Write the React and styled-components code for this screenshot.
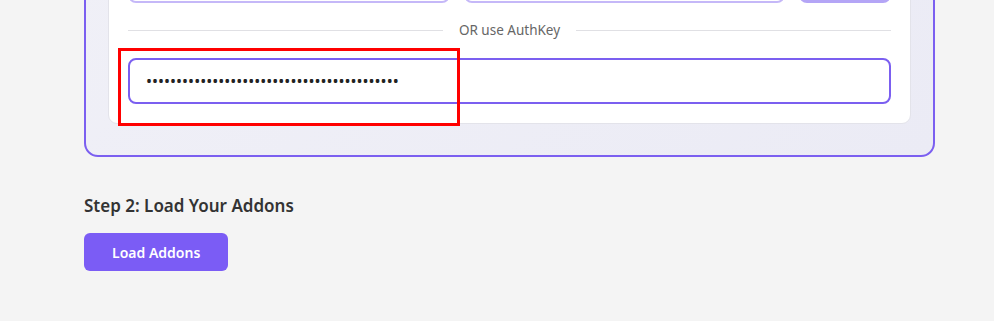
import styled, { createGlobalStyle } from "styled-components";

const GlobalStyle = createGlobalStyle`
  html, body {
    margin: 0;
    padding: 0;
    background: #f4f4f4;
    font-family: "Noto Sans", "Open Sans", sans-serif;
    color: #333;
  }
`;

const Page = styled.div`
  position: relative;
  width: 994px;
  height: 321px;
  overflow: hidden;
`;

const Scroller = styled.div`
  margin-top: -83px;
  padding: 0 59px 0 84px;
`;

const StepBox = styled.section`
  border: 2px solid #7b5ff0;
  border-radius: 14px;
  background: linear-gradient(135deg, #f0f0f7 0%, #ebebf5 100%);
  padding: 22px 22px 31px;
`;

const Card = styled.div`
  background: #fff;
  border: 1px solid #e3e3ea;
  border-radius: 9px;
  padding: 19px 19px 19px;
`;

const Row = styled.div`
  display: flex;
  gap: 14px;
`;

const TextInput = styled.input`
  flex: 1;
  height: 42px;
  box-sizing: border-box;
  border: 2px solid #c5b8f8;
  border-radius: 8px;
  padding: 0 16px;
  font: inherit;
  font-size: 14px;
`;

const LoginButton = styled.button`
  width: 92px;
  height: 42px;
  border: none;
  border-radius: 8px;
  background: #b4a5f6;
  color: #fff;
  font: inherit;
  font-weight: 600;
`;

const Divider = styled.div`
  display: flex;
  align-items: center;
  gap: 16px;
  margin: 18px 0 19px;
  font-size: 13.5px;
  color: #666;

  &::before,
  &::after {
    content: "";
    flex: 1;
    height: 1px;
    background: #e0e0e4;
  }
`;

const KeyInput = styled.input`
  display: block;
  width: 100%;
  height: 46px;
  box-sizing: border-box;
  border: 2px solid #7b5ff0;
  border-radius: 8px;
  padding: 0 16px;
  font-family: "Noto Sans", sans-serif;
  font-size: 16px;
  color: #222;
  outline: none;
`;

const StepTitle = styled.h3`
  margin: 37px 0 16px;
  font-size: 17px;
  font-weight: 600;
  color: #333;
`;

const PrimaryButton = styled.button`
  height: 38px;
  padding: 0 28px;
  border: none;
  border-radius: 6px;
  background: #7b5cf5;
  color: #fff;
  font-family: "Noto Sans", sans-serif;
  font-size: 14px;
  font-weight: 600;
`;

const Highlight = styled.div`
  position: absolute;
  left: 118px;
  top: 48px;
  width: 342px;
  height: 78px;
  box-sizing: border-box;
  border: 3px solid #f00;
  pointer-events: none;
`;

export default function App() {
  return (
    <>
      <GlobalStyle />
      <Page>
        <Scroller>
          <StepBox>
            <Card>
              <Row>
                <TextInput placeholder="Email" />
                <TextInput type="password" placeholder="Password" />
                <LoginButton>Log In</LoginButton>
              </Row>
              <Divider>OR use AuthKey</Divider>
              <KeyInput
                type="password"
                readOnly
                value={"x".repeat(42)}
              />
            </Card>
          </StepBox>
          <StepTitle>Step 2: Load Your Addons</StepTitle>
          <PrimaryButton>Load Addons</PrimaryButton>
        </Scroller>
        <Highlight />
      </Page>
    </>
  );
}
